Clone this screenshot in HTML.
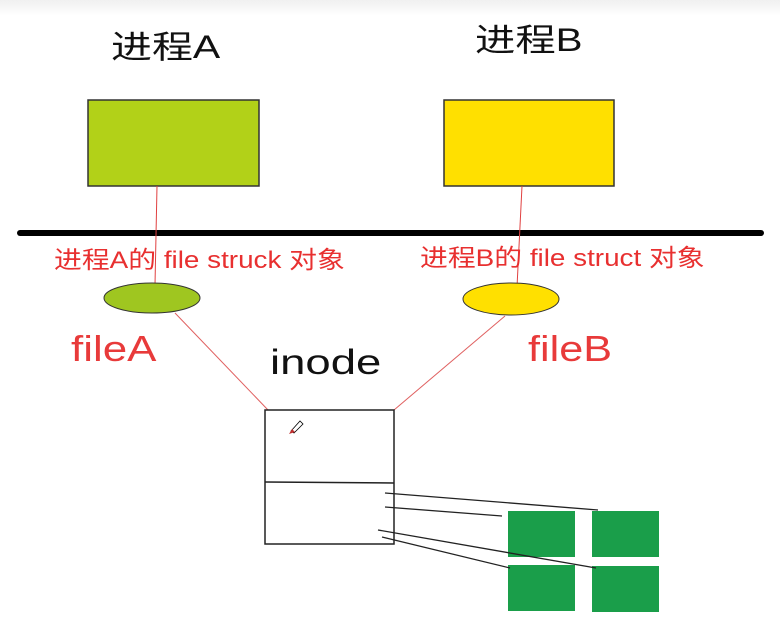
<!DOCTYPE html>
<html><head><meta charset="utf-8"><style>
html,body{margin:0;padding:0;background:#fff;}
body{width:780px;height:636px;position:relative;overflow:hidden;font-family:"Liberation Sans","Noto Sans CJK SC",sans-serif;}
.t{position:absolute;white-space:nowrap;line-height:1;transform-origin:0 0;}
</style></head><body>
<div style="position:absolute;left:0;top:0;width:780px;height:16px;background:linear-gradient(#f0f0f0,#fff);"></div>
<svg width="780" height="636" style="position:absolute;left:0;top:0">
<rect x="88" y="100" width="171" height="86" fill="#b2d118" stroke="#333" stroke-width="1.5"/>
<rect x="444" y="100" width="170" height="86" fill="#ffe000" stroke="#333" stroke-width="1.5"/>
<line x1="20" y1="233" x2="761" y2="233" stroke="#000" stroke-width="6" stroke-linecap="round"/>
<line x1="157" y1="186" x2="155" y2="285" stroke="#e04040" stroke-width="1"/>
<line x1="522" y1="186" x2="517" y2="287" stroke="#e04040" stroke-width="1"/>
<ellipse cx="152" cy="298" rx="48" ry="15" fill="#9fc620" stroke="#333" stroke-width="1"/>
<ellipse cx="511" cy="299" rx="48" ry="16" fill="#ffe000" stroke="#333" stroke-width="1"/>
<line x1="175" y1="313" x2="268" y2="410" stroke="#e06060" stroke-width="1"/>
<line x1="505" y1="316" x2="394" y2="410" stroke="#e06060" stroke-width="1"/>
<rect x="265" y="410" width="129" height="134" fill="none" stroke="#222" stroke-width="1.5"/>
<line x1="265" y1="482" x2="394" y2="483" stroke="#222" stroke-width="1.5"/>
<rect x="508" y="511" width="67" height="46" fill="#1a9e4a"/>
<rect x="592" y="511" width="67" height="46" fill="#1a9e4a"/>
<rect x="508" y="565" width="67" height="46" fill="#1a9e4a"/>
<rect x="592" y="566" width="67" height="46" fill="#1a9e4a"/>
<g stroke="#222" stroke-width="1.3">
<line x1="385" y1="493" x2="598" y2="510"/>
<line x1="385" y1="507" x2="502" y2="516"/>
<line x1="378" y1="530" x2="596" y2="568"/>
<line x1="382" y1="537" x2="510" y2="568"/>
</g>
<path d="M291 431 L300 421 L303 424 L294 433 Z" fill="none" stroke="#000" stroke-width="0.8"/>
<path d="M289 434 L292 429 L295 432 Z" fill="#c03030"/>
</svg>
<div class="t" style="left:111px;top:31px;font-size:32px;color:#111;transform:scaleX(1.28);">进程A</div>
<div class="t" style="left:475px;top:24px;font-size:32px;color:#111;transform:scaleX(1.26);">进程B</div>
<div class="t" style="left:54px;top:249px;font-size:24px;color:#e83030;transform:scaleX(1.16);">进程A的 file struck 对象</div>
<div class="t" style="left:420px;top:247px;font-size:24px;color:#e83030;transform:scaleX(1.16);">进程B的 file struct 对象</div>
<div class="t" style="left:71px;top:331px;font-size:36px;color:#e83a3a;transform:scaleX(1.22);">fileA</div>
<div class="t" style="left:528px;top:331px;font-size:36px;color:#e83a3a;transform:scaleX(1.2);">fileB</div>
<div class="t" style="left:270px;top:345px;font-size:35px;color:#111;transform:scaleX(1.3);">inode</div>
</body></html>
